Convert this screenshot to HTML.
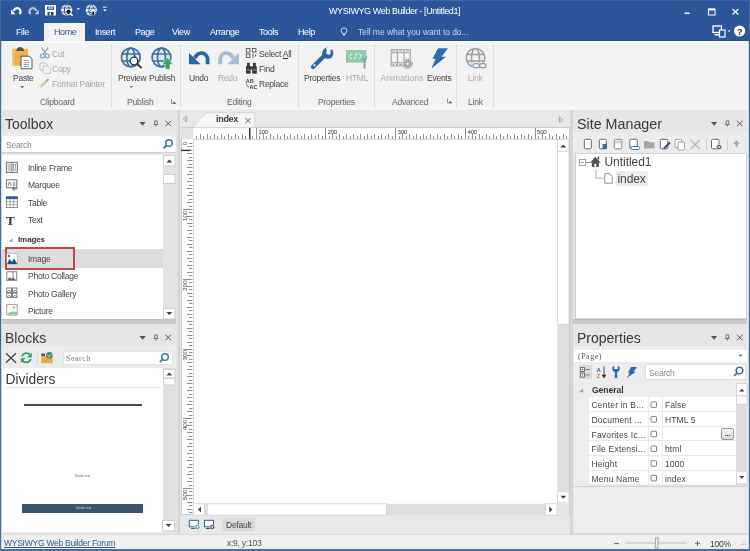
<!DOCTYPE html>
<html><head><meta charset="utf-8">
<style>
*{margin:0;padding:0;box-sizing:border-box}
html{-webkit-font-smoothing:antialiased}body{filter:saturate(1.0001)}html,body{width:750px;height:551px;overflow:hidden;background:#ececec;font-family:"Liberation Sans",sans-serif;font-size:9px;color:#333}
.a{position:absolute}
.t{position:absolute;white-space:nowrap;line-height:1}
.s{font-size:8.5px;letter-spacing:-0.25px}
.m{font-size:9px;letter-spacing:-0.4px;color:#fff}
.sep{position:absolute;width:1px;background:#dcdcdc;top:44px;height:64px}
.grp{position:absolute;top:97.8px;color:#666;font-size:8.5px;letter-spacing:-0.2px}
.dis{color:#a9a9a9}
.ph{position:absolute;background:#e6e6e6}
.ptitle{position:absolute;font-size:14px;color:#3a3a3a;line-height:1}
.w{background:#fff}
.icn{position:absolute;overflow:visible}
</style></head><body>
<!-- title bar -->
<div class="a" style="left:0;top:0;width:750px;height:41px;background:#2b579a"></div><div class="a" style="left:0;top:0;width:750px;height:1px;background:#3a67a9"></div><div class="a" style="left:0;top:40px;width:750px;height:1px;background:#27508e"></div>
<div class="a" style="left:0;top:0;width:1px;height:551px;background:#466c95"></div><div class="a" style="left:1px;top:41px;width:1px;height:510px;background:#c9d6e3"></div>
<div class="a" style="left:749px;top:0;width:1px;height:551px;background:#466c95"></div><div class="a" style="left:748px;top:41px;width:1px;height:510px;background:#c9d6e3"></div>

<div class="t" style="left:329px;top:7px;color:#fff;font-size:9px;letter-spacing:-0.4px">WYSIWYG Web Builder - [Untitled1]</div>

<!-- menu tabs -->
<div class="a" style="left:44px;top:23px;width:41px;height:18px;background:#f3f3f3"></div>
<div class="t m" style="left:16px;top:28px">File</div>
<div class="t m" style="left:54px;top:28px;color:#2b579a">Home</div>
<div class="t m" style="left:95px;top:28px">Insert</div>
<div class="t m" style="left:135px;top:28px">Page</div>
<div class="t m" style="left:172px;top:28px">View</div>
<div class="t m" style="left:210px;top:28px">Arrange</div>
<div class="t m" style="left:259px;top:28px">Tools</div>
<div class="t m" style="left:298px;top:28px">Help</div>
<div class="t m" style="left:358px;top:28px;color:#c9d5e8;font-size:8.5px;letter-spacing:-0.05px">Tell me what you want to do...</div>

<!-- ribbon -->
<div class="a" style="left:2px;top:41px;width:746px;height:69px;background:#f2f2f2"></div><div class="a" style="left:2px;top:41px;width:746px;height:1.5px;background:#fbfbfb"></div><div class="a" style="left:2px;top:107px;width:746px;height:2px;background:#f7f7f7"></div>
<div class="sep" style="left:111px"></div>
<div class="sep" style="left:180px"></div>
<div class="sep" style="left:298px"></div>
<div class="sep" style="left:374px"></div>
<div class="sep" style="left:456px"></div>
<div class="sep" style="left:493px"></div>
<div class="grp t" style="left:40px">Clipboard</div>
<div class="grp t" style="left:127px">Publish</div>
<div class="grp t" style="left:227px">Editing</div>
<div class="grp t" style="left:318px">Properties</div>
<div class="grp t" style="left:392px">Advanced</div>
<div class="grp t" style="left:468px">Link</div>

<div class="t s" style="left:13px;top:74px;color:#444">Paste</div>
<div class="t s dis" style="left:52px;top:50px">Cut</div>
<div class="t s dis" style="left:52px;top:65px">Copy</div>
<div class="t s dis" style="left:52px;top:80px">Format Painter</div>
<div class="t s" style="left:118px;top:74px;color:#444">Preview</div>
<div class="t s" style="left:149px;top:74px;color:#444">Publish</div>
<div class="t s" style="left:189px;top:74px;color:#444">Undo</div>
<div class="t s dis" style="left:218px;top:74px">Redo</div>
<div class="t s" style="left:259px;top:50px;color:#444">Select <u>A</u>ll</div>
<div class="t s" style="left:259px;top:65px;color:#444">Find</div>
<div class="t s" style="left:259px;top:80px;color:#444">Replace</div>
<div class="t s" style="left:304px;top:74px;color:#444">Properties</div>
<div class="t s dis" style="left:346px;top:74px">HTML</div>
<div class="t s dis" style="left:380.5px;top:74px;letter-spacing:0.1px">Animations</div>
<div class="t s" style="left:427px;top:74px;color:#444">Events</div>
<div class="t s dis" style="left:468px;top:74px">Link</div>

<!-- ================= PANELS ================= -->
<!-- Toolbox -->
<div class="ph" style="left:2px;top:110px;width:174px;height:210px"></div><div class="a" style="left:2px;top:131.6px;width:174px;height:4.4px;background:#ececec"></div>
<div class="ptitle t" style="left:5px;top:117px">Toolbox</div>
<div class="a w" style="left:2px;top:136px;width:174px;height:17px;border-bottom:1px solid #cfcfcf"></div>
<div class="t s" style="left:6px;top:141px;color:#888">Search</div>
<div class="a w" style="left:2px;top:155px;width:161px;height:165px"></div>
<div class="a" style="left:163px;top:155px;width:13px;height:165px;background:#e3e3e3"></div>


<!-- toolbox items -->
<div class="a" style="left:2px;top:249px;width:161px;height:19px;background:#dcdcdc"></div>
<div class="a" style="left:5px;top:247px;width:70px;height:23px;border:2px solid #c2474b"></div>
<div class="t s" style="left:28px;top:164px;color:#444">Inline Frame</div>
<div class="t s" style="left:28px;top:181px;color:#444">Marquee</div>
<div class="t s" style="left:28px;top:199px;color:#444">Table</div>
<div class="t s" style="left:28px;top:216px;color:#444">Text</div>
<div class="t" style="left:18px;top:236px;color:#333;font-size:8px;font-weight:bold;letter-spacing:-0.1px">Images</div>
<div class="t s" style="left:28px;top:255px;color:#444">Image</div>
<div class="t s" style="left:28px;top:272px;color:#444">Photo Collage</div>
<div class="t s" style="left:28px;top:290px;color:#444">Photo Gallery</div>
<div class="t s" style="left:28px;top:307px;color:#444">Picture</div>
<!-- Blocks -->
<div class="ph" style="left:2px;top:322.5px;width:174px;height:211.5px"></div><div class="a" style="left:2px;top:319.3px;width:174px;height:5px;background:#cbcbcb;border-top:1px solid #bfbfbf"></div><div class="a" style="left:2px;top:345.5px;width:174px;height:22px;background:#ececec"></div>
<div class="ptitle t" style="left:5px;top:331px">Blocks</div>
<div class="a w" style="left:63px;top:351px;width:109px;height:14px"></div>
<div class="a w" style="left:2px;top:368px;width:161px;height:164px"></div>
<div class="a" style="left:163px;top:368px;width:13px;height:164px;background:#e0e0e0"></div>
<div class="ptitle t" style="left:5.5px;top:373px;font-size:13.8px">Dividers</div>


<!-- blocks contents -->
<div class="a" style="left:37px;top:351px;width:1px;height:14px;background:#d8d8d8"></div>
<div class="a w" style="left:62.5px;top:350.5px;width:110px;height:14.5px;border:1px solid #e2e2e2"></div>
<div class="t" style="left:66px;top:355px;color:#777;font-family:'Liberation Serif',serif;font-size:8px;letter-spacing:0.5px">Search</div>
<div class="a" style="left:5px;top:387px;width:156px;height:1px;background:#e3e3e3"></div>
<div class="a" style="left:24px;top:404px;width:118px;height:2px;background:#434b4e"></div>
<div class="a" style="left:22px;top:504px;width:121px;height:8.5px;background:#3b5670"></div>
<div class="t" style="left:75px;top:475px;color:#666;font-size:3px">Divider text</div>
<div class="t" style="left:76px;top:506.5px;color:#c8d2dc;font-size:3px">Divider text</div>
<!-- doc area -->
<div class="a" style="left:176px;top:110px;width:4.5px;height:424px;background:#e3e3e3"></div><div class="a" style="left:177.5px;top:110px;width:3px;height:424px;background:#d3d3d3"></div>
<div class="a" style="left:180px;top:110px;width:390px;height:424px;background:#e8e8e8"></div>
<div class="a" style="left:180.5px;top:127.3px;width:389px;height:388px;background:#fff;border:1px solid #cbcbcb"></div>
<div class="a" style="left:181px;top:128px;width:11.7px;height:11.3px;background:#e3e3e3"></div>
<div class="a" style="left:192.7px;top:139.3px;width:364.5px;height:364.5px;background:#fff;border-top:1px solid #d8d8d8;border-left:1px solid #d8d8d8"></div>
<div class="t" style="left:258.3px;top:129.3px;color:#333;font-size:6.2px;letter-spacing:-0.3px">100</div>
<div class="t" style="left:327.5px;top:129.3px;color:#333;font-size:6.2px;letter-spacing:-0.3px">200</div>
<div class="t" style="left:397.5px;top:129.3px;color:#333;font-size:6.2px;letter-spacing:-0.3px">300</div>
<div class="t" style="left:467.5px;top:129.3px;color:#333;font-size:6.2px;letter-spacing:-0.3px">400</div>
<div class="t" style="left:537px;top:129.3px;color:#333;font-size:6.2px;letter-spacing:-0.3px">500</div>
<!-- bottom doc toolbar -->
<div class="a" style="left:223px;top:518.4px;width:31.5px;height:13px;background:#dadada"></div>
<div class="t s" style="left:226px;top:521px;color:#444">Default</div>
<!-- right panels -->
<div class="a" style="left:569.5px;top:110px;width:3.5px;height:424px;background:#d6d6d6"></div>
<div class="ph" style="left:573px;top:110px;width:174px;height:210px"></div><div class="a" style="left:573px;top:131.6px;width:174px;height:21.7px;background:#ececec"></div>
<div class="ptitle t" style="left:577px;top:117px;font-size:14.3px">Site Manager</div>
<div class="a" style="left:705.5px;top:139px;width:1px;height:11px;background:#d4d4d4"></div>
<div class="a" style="left:726.5px;top:139px;width:1px;height:11px;background:#d4d4d4"></div>
<div class="a w" style="left:574.5px;top:153.3px;width:172px;height:166.2px;border:1px solid #d2d2d2"></div>
<div class="a" style="left:616px;top:171.2px;width:31.6px;height:15px;background:#ececec"></div>
<div class="t" style="left:604.5px;top:156px;color:#444;font-size:12px;letter-spacing:-0.05px">Untitled1</div>
<div class="t" style="left:617.5px;top:173px;color:#444;font-size:12px;letter-spacing:-0.1px">index</div>
<div class="ph" style="left:573px;top:322.5px;width:174px;height:211.5px"></div><div class="a" style="left:573px;top:319.2px;width:174px;height:5px;background:#cbcbcb;border-top:1px solid #bdbdbd"></div><div class="a" style="left:573px;top:345.5px;width:174px;height:37.5px;background:#ececec"></div>
<div class="ptitle t" style="left:577px;top:331px">Properties</div>
<div class="a w" style="left:574px;top:349.6px;width:172.5px;height:12px"></div>
<div class="t" style="left:578px;top:352.5px;color:#555;font-family:'Liberation Serif',serif;font-size:8px;letter-spacing:0.5px">(Page)</div>
<div class="a" style="left:578.8px;top:365.2px;width:13.2px;height:13.8px;background:#dadada"></div>
<div class="a w" style="left:644.8px;top:364px;width:101px;height:16.2px;border:1px solid #dedede"></div>
<div class="t s" style="left:649px;top:368.5px;color:#888">Search</div>
<div class="a" style="left:574px;top:383px;width:162px;height:14.3px;background:#ececec"></div>
<div class="a" style="left:574px;top:397.3px;width:15.3px;height:88.5px;background:#ececec"></div>
<div class="t" style="left:592px;top:386.3px;color:#333;font-size:8.5px;font-weight:bold">General</div>
<div class="a w" style="left:589.3px;top:397.3px;width:146.7px;height:14.7px;border-bottom:1px solid #ebebeb"></div>
<div class="t" style="left:591.5px;top:401.1px;color:#444;font-size:8.5px;letter-spacing:0.2px">Center in B...</div>
<div class="t" style="left:665px;top:401.1px;color:#444;font-size:8.5px;letter-spacing:0.1px">False</div>
<div class="a w" style="left:589.3px;top:412.0px;width:146.7px;height:14.7px;border-bottom:1px solid #ebebeb"></div>
<div class="t" style="left:591.5px;top:415.8px;color:#444;font-size:8.5px;letter-spacing:0.2px">Document ...</div>
<div class="t" style="left:665px;top:415.8px;color:#444;font-size:8.5px;letter-spacing:0.1px">HTML 5</div>
<div class="a w" style="left:589.3px;top:426.7px;width:146.7px;height:14.7px;border-bottom:1px solid #ebebeb"></div>
<div class="t" style="left:591.5px;top:430.5px;color:#444;font-size:8.5px;letter-spacing:0.2px">Favorites Ic...</div>
<div class="a w" style="left:589.3px;top:441.4px;width:146.7px;height:14.7px;border-bottom:1px solid #ebebeb"></div>
<div class="t" style="left:591.5px;top:445.2px;color:#444;font-size:8.5px;letter-spacing:0.2px">File Extensi...</div>
<div class="t" style="left:665px;top:445.2px;color:#444;font-size:8.5px;letter-spacing:0.1px">html</div>
<div class="a w" style="left:589.3px;top:456.1px;width:146.7px;height:14.7px;border-bottom:1px solid #ebebeb"></div>
<div class="t" style="left:591.5px;top:459.9px;color:#444;font-size:8.5px;letter-spacing:0.2px">Height</div>
<div class="t" style="left:665px;top:459.9px;color:#444;font-size:8.5px;letter-spacing:0.1px">1000</div>
<div class="a w" style="left:589.3px;top:470.8px;width:146.7px;height:14.7px;border-bottom:1px solid #ebebeb"></div>
<div class="t" style="left:591.5px;top:474.6px;color:#444;font-size:8.5px;letter-spacing:0.2px">Menu Name</div>
<div class="t" style="left:665px;top:474.6px;color:#444;font-size:8.5px;letter-spacing:0.1px">index</div>

<div class="a" style="left:648px;top:397.3px;width:1px;height:88.2px;background:#ebebeb"></div>
<div class="a" style="left:661.5px;top:397.3px;width:1px;height:88.2px;background:#ebebeb"></div>
<div class="a" style="left:736px;top:383px;width:11px;height:102.8px;background:#dcdcdc"></div>
<div class="a" style="left:721.3px;top:427.9px;width:13px;height:12px;border:1px solid #9a9a9a;border-radius:2px;background:linear-gradient(#f4f4f4,#dcdcdc)"></div>
<div class="t" style="left:724.8px;top:430px;color:#333;font-size:7px;font-weight:bold">...</div>
<div class="a" style="left:574px;top:486px;width:172.5px;height:48px;background:#ececec;border-top:1px solid #d0d0d0;border-bottom:1px solid #d6d6d6"></div>
<!-- status bar -->
<div class="a" style="left:2px;top:534px;width:746px;height:15px;background:#f0f0f0;border-top:1px solid #d9d9d9"></div>
<div class="t s" style="left:4px;top:539px;color:#2f5d92;text-decoration:underline">WYSIWYG Web Builder Forum</div>
<div class="t s" style="left:227px;top:539px;color:#555">x:9, y:103</div>

<svg class="a" style="left:0;top:0" width="750" height="551" viewBox="0 0 750 551">
<!-- QAT -->
<path d="M13.8 11 A3.4 3.4 0 1 1 19.5 14" fill="none" stroke="#fff" stroke-width="2.3"/>
<path d="M11 9.6 L11 14.3 L15.7 14.3 Z" fill="#fff"/>
<path d="M36.2 11 A3.4 3.4 0 1 0 30.5 14" fill="none" stroke="#a9c1e3" stroke-width="2.3"/>
<path d="M39 9.6 L39 14.3 L34.3 14.3 Z" fill="#a9c1e3"/>
<rect x="45" y="5" width="11" height="10.5" fill="#fff"/>
<rect x="47" y="6.5" width="7" height="3.5" fill="#2b579a"/>
<rect x="48" y="6.8" width="5" height="2.6" fill="#fff" opacity=".5"/>
<rect x="47.5" y="12" width="6" height="3.5" fill="#1e3f70"/>
<rect x="49.5" y="12.5" width="1.5" height="2.5" fill="#fff"/>
<circle cx="66.7" cy="10" r="5.6" fill="#f2f5fa"/>
<g fill="none" stroke="#2b4f80" stroke-width="0.9"><ellipse cx="66.7" cy="10" rx="2.3" ry="5"/><path d="M61.8 8 H71.6 M61.8 12 H71.6"/></g>
<circle cx="68.5" cy="11.8" r="2.6" fill="#111" stroke="#fff" stroke-width="0.9"/>
<path d="M70.3 13.6 L72.6 15.8" stroke="#fff" stroke-width="1.5"/>
<path d="M76.5 8.3 h3.5 l-1.75 1.8z" fill="#fff"/>
<circle cx="91.3" cy="10.2" r="5.6" fill="#f2f5fa"/>
<g fill="none" stroke="#2b4f80" stroke-width="0.9"><ellipse cx="91.3" cy="10.2" rx="2.3" ry="5"/><path d="M86.4 8.2 H96.2 M86.4 12.2 H96.2"/></g>
<path d="M93.2 8.3 L97.3 12.4 H95.1 V15.6 H91.3 V12.4 H89.1Z" fill="#fff" stroke="#2b579a" stroke-width="0.7"/>
<path d="M92.3 11.5 V15 H94.1 V11.5" fill="#111"/>
<path d="M103 7.2 h3.6" stroke="#fff" stroke-width="0.9"/>
<path d="M103 9.6 h3.6 l-1.8 1.8z" fill="#fff"/>
<!-- window controls -->
<rect x="684.5" y="12.5" width="5" height="1.5" fill="#fff"/>
<rect x="708.5" y="9" width="6.5" height="6" fill="none" stroke="#fff" stroke-width="1"/>
<rect x="708.5" y="8.5" width="6.5" height="2" fill="#fff"/>
<path d="M732.5 9 L738.3 14.5 M738.3 9 L732.5 14.5" stroke="#fff" stroke-width="1.1"/>
<rect x="713" y="26" width="8.5" height="6.5" fill="none" stroke="#fff" stroke-width="1.3"/>
<rect x="714.5" y="34" width="5" height="1.5" fill="#fff"/>
<rect x="719.5" y="30" width="5.5" height="7" fill="#2b579a" stroke="#fff" stroke-width="1.2"/>
<path d="M727.5 30.5 h3 l-1.5 1.6z" fill="#fff"/>
<circle cx="739.6" cy="31" r="5.6" fill="#fff"/>
<text x="739.6" y="34.6" font-size="9.5" font-family="Liberation Sans" font-weight="bold" fill="#333" text-anchor="middle">?</text>
<!-- lightbulb -->
<circle cx="344" cy="30.8" r="2.9" fill="none" stroke="#c9d5e8" stroke-width="1"/>
<path d="M342.6 33.3 L344 36 L345.4 33.3" fill="none" stroke="#c9d5e8" stroke-width="1"/>
</svg>

<svg class="a" style="left:0;top:0" width="750" height="551" viewBox="0 0 750 551">
<!-- Paste -->
<rect x="12.4" y="48.8" width="15.6" height="17" fill="#f0b24e"/>
<rect x="12.4" y="48.8" width="2" height="17" fill="#f5c679"/>
<path d="M16.3 51 Q16.3 47.5 20.2 47 Q24.1 47.5 24.1 51 Z" fill="#555"/>
<path d="M21 56.2 H29.3 L32 58.9 V68.8 H21 Z" fill="#fff" stroke="#555" stroke-width="1"/>
<path d="M23.5 60.5 H29.5 M23.5 62.5 H29.5 M23.5 64.5 H29.5 M23.5 66.5 H29.5" stroke="#6f8fb0" stroke-width="0.8"/>
<path d="M20.2 86.2 h4 l-2 1.8z" fill="#444"/>
<!-- Cut -->
<path d="M41.5 47.5 L46 54 M48 47.5 L43.5 54" stroke="#8094a8" stroke-width="1.2"/>
<circle cx="42.3" cy="56" r="1.9" fill="none" stroke="#87aacb" stroke-width="1.3"/>
<circle cx="47.2" cy="56" r="1.9" fill="none" stroke="#87aacb" stroke-width="1.3"/>
<!-- Copy -->
<path d="M40 63 H45.5 L47 64.5 V70 H40 Z" fill="none" stroke="#c0c0c0" stroke-width="0.9"/>
<path d="M43 66 H48.5 L50.3 67.8 V73.4 H43 Z" fill="#f3f3f3" stroke="#b8c4cf" stroke-width="0.9"/>
<!-- Format painter -->
<path d="M40.5 87 L45.5 82" stroke="#e2c9a8" stroke-width="3"/>
<path d="M45.5 82 L48.5 79" stroke="#a8a8a8" stroke-width="1.8"/>
<!-- Preview globe -->
<g stroke="#406f9c" stroke-width="1.7" fill="none">
<circle cx="130.8" cy="57.5" r="9.4" fill="#dbeaf4"/>
<ellipse cx="130.8" cy="57.5" rx="4" ry="9.4"/>
<path d="M121.8 54 H139.8 M121.8 61 H139.8"/>
</g>
<circle cx="134" cy="61" r="3.8" fill="#fff" stroke="#333" stroke-width="1.3"/>
<path d="M136.8 63.8 L141.6 68" stroke="#333" stroke-width="1.8"/>
<path d="M129.5 86.2 h3.5 l-1.75 1.6z" fill="#444"/>
<!-- Publish globe -->
<g stroke="#406f9c" stroke-width="1.7" fill="none">
<circle cx="161.5" cy="57.5" r="9.4" fill="#dbeaf4"/>
<ellipse cx="161.5" cy="57.5" rx="4" ry="9.4"/>
<path d="M152.5 54 H170.5 M152.5 61 H170.5"/>
</g>
<path d="M167.6 57.3 L173 64.5 H170 V69.3 H165.2 V64.5 H162.2 Z" fill="#3aa46b" stroke="#f3f3f3" stroke-width="0.6"/>
<path d="M171.5 99 v4.5 h4.5" fill="none" stroke="#777" stroke-width="0.8"/><path d="M173.5 101 l2.5 2.5 h-2.5z" fill="#555"/>
<path d="M447.5 98.5 v4.5 h4.5" fill="none" stroke="#777" stroke-width="0.8"/><path d="M449.5 100.5 l2.5 2.5 h-2.5z" fill="#555"/>
<!-- Undo / Redo -->
<path d="M195 58.5 A6.3 6.3 0 0 1 207.6 60.5 V64.3" fill="none" stroke="#2c66aa" stroke-width="3.8"/>
<path d="M189 52.8 V64.3 H200.5 Z" fill="#2c66aa"/>
<path d="M232.8 58.5 A6.3 6.3 0 0 0 220.2 60.5 V64.3" fill="none" stroke="#a4bdd8" stroke-width="3.8"/>
<path d="M238.8 52.8 V64.3 H227.3 Z" fill="#a4bdd8"/>
<!-- Select all -->
<g fill="none" stroke="#555" stroke-width="0.9">
<rect x="246.3" y="48.5" width="3.6" height="3.6"/><rect x="252.3" y="48.5" width="3.6" height="3.6"/>
<rect x="246.3" y="54" width="3.6" height="3.6"/>
</g>
<path d="M253 53.5 v4.5 M255.5 54.5 v2" stroke="#555" stroke-width="0.9"/>
<!-- Find binoculars -->
<g fill="#383838">
<rect x="246" y="66" width="4.6" height="7.8" rx="0.8"/><rect x="252.2" y="66" width="4.6" height="7.8" rx="0.8"/>
<rect x="247" y="62.8" width="2.8" height="4"/><rect x="253" y="62.8" width="2.8" height="4"/>
<rect x="249.5" y="66.5" width="3.5" height="3"/>
</g>
<path d="M247 70 h2.5 M253.2 70 h2.5" stroke="#ccc" stroke-width="0.8"/>
<!-- Replace -->
<text x="245.8" y="83" font-size="5.5" font-family="Liberation Sans" font-weight="bold" fill="#444">AB</text>
<text x="249.5" y="89" font-size="5.5" font-family="Liberation Sans" font-weight="bold" fill="#444">AC</text>
<path d="M246.5 83.5 q0 3.5 2.5 3.5" fill="none" stroke="#3a78b5" stroke-width="0.9"/>
<!-- Wrench -->
<path d="M313 67 L324 56" stroke="#2e65a5" stroke-width="4.2" stroke-linecap="round"/>
<circle cx="327.8" cy="53.2" r="5.6" fill="#2e65a5"/>
<path d="M327.8 53.2 L334 47 L331 46 L326 48.5 Z" fill="#f3f3f3"/>
<circle cx="328.5" cy="52.5" r="2.2" fill="#f3f3f3"/>
<circle cx="314.5" cy="65.3" r="1" fill="#fff"/>
<!-- HTML -->
<rect x="346" y="50" width="20.4" height="12.7" fill="#8fcdaa"/>
<path d="M352 53.5 L349 56.3 L352 59 M356.5 53 L354.5 59.5 M359 53.5 L362 56.3 L359 59" fill="none" stroke="#e7f5ec" stroke-width="1"/>
<path d="M364.5 60 V68.8" stroke="#8a9bb0" stroke-width="1.8"/>
<path d="M361.8 56.3 Q362 60.5 364.5 60.5 Q367 60.5 367.3 56.3 L366 56.3 L366 58.5 L363 58.5 L363 56.3 Z" fill="#8a9bb0"/>
<!-- Animations -->
<g fill="none" stroke="#a3a3a3" stroke-width="1.1">
<rect x="391.2" y="49.7" width="19" height="16.2"/>
<path d="M391.2 52.8 H410.2 M391.2 62.8 H410.2 M397.5 52.8 V62.8 M404 52.8 V62.8"/>
</g>
<path d="M392.5 51.2 h2 M396 51.2 h2 M399.5 51.2 h2 M403 51.2 h2 M406.5 51.2 h2 M392.5 64.3 h2 M396 64.3 h2 M399.5 64.3 h2" stroke="#a3a3a3" stroke-width="1.2"/>
<circle cx="407.6" cy="63.8" r="4.3" fill="#a3a3a3" stroke="#f3f3f3" stroke-width="1"/>
<circle cx="407.6" cy="63.8" r="4.6" fill="none" stroke="#a3a3a3" stroke-width="1.5" stroke-dasharray="1.4 1"/>
<circle cx="407.6" cy="63.8" r="1.4" fill="#f3f3f3"/>
<!-- Events bolt -->
<path d="M438 48.2 H448 L441.5 56.8 H446 L431.5 68.6 L435.5 58.8 H432.5 Z" fill="#2e6ab3"/>
<!-- Link globe -->
<g stroke="#9d9d9d" stroke-width="1.5" fill="none">
<circle cx="475.5" cy="57.8" r="9.3"/>
<ellipse cx="475.5" cy="57.8" rx="4" ry="9.3"/>
<path d="M466.5 54.5 H484.5 M466.5 61 H484.5"/>
</g>
<rect x="472" y="62.5" width="14.6" height="6" fill="#f3f3f3"/>
<g fill="none" stroke="#7f9fba" stroke-width="1.3">
<rect x="473" y="63.6" width="6.5" height="4" rx="2"/><rect x="479.5" y="63.6" width="6.5" height="4" rx="2"/>
</g>
</svg>

<svg class="a" style="left:0;top:0" width="750" height="551" viewBox="0 0 750 551">
<!-- panel header buttons -->
<g id="hb">
<path d="M139.4 122 h6.3 l-3.15 3.7z" fill="#555"/>
<path d="M154.6 120.9 h2.6 v3.4 M154.6 120.9 v3.4 M153.5 124.5 h4.8 M155.9 124.5 v2.2" fill="none" stroke="#6a6a6a" stroke-width="0.9"/>
<path d="M165.5 120.7 L171 126.3 M171 120.7 L165.5 126.3" stroke="#555" stroke-width="1"/>
</g>
<use href="#hb" x="571.5" y="0"/>
<use href="#hb" x="0" y="214"/>
<use href="#hb" x="571.5" y="214"/>
<!-- toolbox search magnifier -->
<circle cx="169" cy="143" r="3.3" fill="none" stroke="#3b7a8d" stroke-width="1.5"/>
<path d="M166.6 145.4 L163.6 148.4" stroke="#3b7a8d" stroke-width="1.8"/>
<!-- toolbox scrollbar -->
<rect x="163.5" y="155.5" width="11.5" height="10.5" fill="#fff" stroke="#d0d0d0" stroke-width="1"/>
<path d="M166.3 162.5 h6 l-3 -3z" fill="#444"/>
<rect x="163.5" y="174.5" width="11.5" height="9" fill="#fff" stroke="#d0d0d0" stroke-width="1"/>
<rect x="163.5" y="308.5" width="11.5" height="10.5" fill="#fff" stroke="#d0d0d0" stroke-width="1"/>
<path d="M166.3 312 h6 l-3 3z" fill="#444"/>
<!-- inline frame icon -->
<rect x="6.3" y="162.3" width="11" height="10.3" fill="#fff" stroke="#666" stroke-width="0.9"/>
<rect x="7.5" y="163.5" width="4" height="8" fill="#c9c9c9"/>
<path d="M12 162.3 v10.3" stroke="#666" stroke-width="0.9"/>
<rect x="13.5" y="164.5" width="2.2" height="6" fill="none" stroke="#888" stroke-width="0.7"/>
<!-- marquee icon -->
<rect x="6.3" y="179.8" width="10.5" height="8" fill="#fff" stroke="#666" stroke-width="0.9"/>
<path d="M8 185.5 l1.5 -3.5 l1.5 3.5 M12.5 183 h3 M12.5 185 h3" fill="none" stroke="#555" stroke-width="0.8"/>
<path d="M17.5 188.8 h-5 M14.5 186.8 l-2 2 l2 2" fill="none" stroke="#2d6aa3" stroke-width="1"/>
<!-- table icon -->
<rect x="6.3" y="196.8" width="11" height="10.8" fill="#fff" stroke="#777" stroke-width="0.8"/>
<rect x="6" y="196.5" width="11.6" height="2.6" fill="#2b5f8f"/>
<path d="M6.3 201.8 h11 M6.3 204.6 h11 M10 199 v8.6 M13.7 199 v8.6" stroke="#888" stroke-width="0.7"/>
<!-- text icon -->
<text x="6" y="224.5" font-family="Liberation Serif" font-size="13" font-weight="bold" fill="#333">T</text>
<!-- images triangle -->
<path d="M12.4 238.4 v3.2 h-3.2z" fill="#777"/>
<!-- image icon -->
<rect x="6.8" y="253.6" width="10.4" height="10.4" fill="#fff" stroke="#8aa" stroke-width="0.6"/>
<path d="M7 264 L9.5 259 L12 262 L14 258.5 L17.2 264 Z" fill="#1f4d80"/>
<circle cx="9" cy="256" r="1.2" fill="#3a6fa5"/>
<!-- photo collage -->
<rect x="6.8" y="271.8" width="10" height="8.5" fill="#fff" stroke="#666" stroke-width="0.8"/>
<path d="M7.3 280 l2.5 -3 l2 2 l1.5 -1.5 l2.5 2.5z" fill="#666"/>
<path d="M13 272 v8" stroke="#666" stroke-width="0.8"/>
<!-- photo gallery -->
<g fill="#fff" stroke="#666" stroke-width="0.8">
<rect x="6.8" y="288" width="4.6" height="4.3"/><rect x="12.4" y="288" width="4.6" height="4.3"/>
<rect x="6.8" y="293.2" width="4.6" height="4.3"/><rect x="12.4" y="293.2" width="4.6" height="4.3"/>
</g>
<path d="M7.2 292 l2 -2 l2 2 M12.8 292 l2 -2 l2 2 M7.2 297.2 l2 -2 l2 2 M12.8 297.2 l2 -2 l2 2" fill="none" stroke="#555" stroke-width="0.7"/>
<!-- picture -->
<rect x="6.8" y="304.7" width="10.4" height="10.3" fill="#fff" stroke="#888" stroke-width="0.8"/>
<path d="M7.2 314.6 Q10 310 17 312 V314.6z" fill="#8cc9a8"/>
<circle cx="14" cy="307.5" r="1.2" fill="#e5b84d"/>
</svg>

<svg class="a" style="left:0;top:0" width="750" height="551" viewBox="0 0 750 551">
<path d="M6 353.3 L16 362.7 M16 353.3 L6 362.7" stroke="#444" stroke-width="1.3"/>
<path d="M22 356.5 A4.6 4.6 0 0 1 30.5 355.5" fill="none" stroke="#3aa36a" stroke-width="1.8"/>
<path d="M31.8 352.5 L31.8 357.5 L27 357.5 Z" fill="#3aa36a"/>
<path d="M30.7 359 A4.6 4.6 0 0 1 22.2 360" fill="none" stroke="#3aa36a" stroke-width="1.8"/>
<path d="M20.8 363.3 L20.8 358.3 L25.6 358.3 Z" fill="#3aa36a"/>
<rect x="41.3" y="356" width="11.4" height="7.3" fill="#eaa94c"/>
<path d="M41.3 356 V353.5 H45 V356" fill="#555"/>
<circle cx="49.3" cy="355.3" r="3.2" fill="#4c8b7a"/>
<path d="M47.8 355.3 l1.2 1.2 l2 -2.2" fill="none" stroke="#fff" stroke-width="0.8"/>
<circle cx="165" cy="357" r="3.3" fill="none" stroke="#3b7a8d" stroke-width="1.5"/>
<path d="M162.6 359.4 L159.8 362.2" stroke="#3b7a8d" stroke-width="1.8"/>
<!-- blocks scrollbar -->
<rect x="163.5" y="369.5" width="11.5" height="8.5" fill="#fff" stroke="#d0d0d0" stroke-width="1"/>
<path d="M166.3 375.5 h6 l-3 -3z" fill="#444"/>
<rect x="163.5" y="378.5" width="11.5" height="6.5" fill="#fff" stroke="#d0d0d0" stroke-width="1"/>
<rect x="162.5" y="520.5" width="12" height="10.5" fill="#fff" stroke="#d0d0d0" stroke-width="1"/>
<path d="M165.5 524 h6 l-3 3z" fill="#444"/>
</svg>

<svg class="a" style="left:0;top:0" width="750" height="551" viewBox="0 0 750 551">
<path d="M186.7 116 V122 L183.3 119 Z" fill="none" stroke="#999" stroke-width="0.8"/>
<path d="M559.4 117 V122.6 L562.7 119.8 Z" fill="none" stroke="#999" stroke-width="0.8"/>
<path d="M192.7 127.3 L206 112.7 H254.7 V127.3" fill="#f6f6f6" stroke="#d0d0d0" stroke-width="0.8"/>
<path d="M245.3 118.2 L250.7 123 M250.7 118.2 L245.3 123" stroke="#555" stroke-width="0.9"/>
<text x="216" y="122.3" font-size="9" font-weight="bold" font-family="Liberation Sans" fill="#3a3a3a" letter-spacing="-0.3">index</text>
<path d="M196.5 136.2 V139 M200.5 134 V139 M203.5 136.2 V139 M207.5 134 V139 M210.5 136.2 V139 M214.5 134 V139 M217.5 136.2 V139 M221.5 134 V139 M224.5 136.2 V139 M228.5 134 V139 M231.5 136.2 V139 M235.5 134 V139 M238.5 136.2 V139 M242.5 134 V139 M245.5 136.2 V139 M249.5 134 V139 M252.5 136.2 V139 M256.5 128 V139 M259.5 136.2 V139 M263.5 134 V139 M266.5 136.2 V139 M270.5 134 V139 M273.5 136.2 V139 M277.5 134 V139 M280.5 136.2 V139 M284.5 134 V139 M287.5 136.2 V139 M290.5 134 V139 M294.5 136.2 V139 M297.5 134 V139 M301.5 136.2 V139 M304.5 134 V139 M308.5 136.2 V139 M311.5 134 V139 M315.5 136.2 V139 M318.5 134 V139 M322.5 136.2 V139 M325.5 128 V139 M329.5 136.2 V139 M332.5 134 V139 M336.5 136.2 V139 M339.5 134 V139 M343.5 136.2 V139 M346.5 134 V139 M350.5 136.2 V139 M353.5 134 V139 M357.5 136.2 V139 M360.5 134 V139 M364.5 136.2 V139 M367.5 134 V139 M371.5 136.2 V139 M374.5 134 V139 M378.5 136.2 V139 M381.5 134 V139 M385.5 136.2 V139 M388.5 134 V139 M392.5 136.2 V139 M395.5 128 V139 M399.5 136.2 V139 M402.5 134 V139 M406.5 136.2 V139 M409.5 134 V139 M413.5 136.2 V139 M416.5 134 V139 M420.5 136.2 V139 M423.5 134 V139 M426.5 136.2 V139 M430.5 134 V139 M433.5 136.2 V139 M437.5 134 V139 M440.5 136.2 V139 M444.5 134 V139 M447.5 136.2 V139 M451.5 134 V139 M454.5 136.2 V139 M458.5 134 V139 M461.5 136.2 V139 M465.5 128 V139 M468.5 136.2 V139 M472.5 134 V139 M475.5 136.2 V139 M479.5 134 V139 M482.5 136.2 V139 M486.5 134 V139 M489.5 136.2 V139 M493.5 134 V139 M496.5 136.2 V139 M500.5 134 V139 M503.5 136.2 V139 M507.5 134 V139 M510.5 136.2 V139 M514.5 134 V139 M517.5 136.2 V139 M521.5 134 V139 M524.5 136.2 V139 M528.5 134 V139 M531.5 136.2 V139 M535.5 128 V139 M538.5 136.2 V139 M542.5 134 V139 M545.5 136.2 V139 M549.5 134 V139 M552.5 136.2 V139 M556.5 134 V139 M559.5 136.2 V139 M563.5 134 V139 M566.5 136.2 V139" stroke="#8f8f8f" stroke-width="1"/>
<path d="M189 143.5 H192.5 M187 146.5 H192.5 M189 150.5 H192.5 M187 153.5 H192.5 M189 157.5 H192.5 M187 160.5 H192.5 M189 164.5 H192.5 M187 167.5 H192.5 M189 171.5 H192.5 M187 174.5 H192.5 M189 178.5 H192.5 M187 181.5 H192.5 M189 185.5 H192.5 M187 188.5 H192.5 M189 192.5 H192.5 M187 195.5 H192.5 M189 199.5 H192.5 M187 202.5 H192.5 M189 206.5 H192.5 M183 209.5 H192.5 M189 212.5 H192.5 M187 216.5 H192.5 M189 219.5 H192.5 M187 223.5 H192.5 M189 226.5 H192.5 M187 230.5 H192.5 M189 233.5 H192.5 M187 237.5 H192.5 M189 240.5 H192.5 M187 244.5 H192.5 M189 247.5 H192.5 M187 251.5 H192.5 M189 254.5 H192.5 M187 258.5 H192.5 M189 261.5 H192.5 M187 265.5 H192.5 M189 268.5 H192.5 M187 272.5 H192.5 M189 275.5 H192.5 M183 279.5 H192.5 M189 282.5 H192.5 M187 286.5 H192.5 M189 289.5 H192.5 M187 293.5 H192.5 M189 296.5 H192.5 M187 300.5 H192.5 M189 303.5 H192.5 M187 307.5 H192.5 M189 310.5 H192.5 M187 314.5 H192.5 M189 317.5 H192.5 M187 321.5 H192.5 M189 324.5 H192.5 M187 328.5 H192.5 M189 331.5 H192.5 M187 335.5 H192.5 M189 338.5 H192.5 M187 342.5 H192.5 M189 345.5 H192.5 M183 349.5 H192.5 M189 352.5 H192.5 M187 355.5 H192.5 M189 359.5 H192.5 M187 362.5 H192.5 M189 366.5 H192.5 M187 369.5 H192.5 M189 373.5 H192.5 M187 376.5 H192.5 M189 380.5 H192.5 M187 383.5 H192.5 M189 387.5 H192.5 M187 390.5 H192.5 M189 394.5 H192.5 M187 397.5 H192.5 M189 401.5 H192.5 M187 404.5 H192.5 M189 408.5 H192.5 M187 411.5 H192.5 M189 415.5 H192.5 M183 418.5 H192.5 M189 422.5 H192.5 M187 425.5 H192.5 M189 429.5 H192.5 M187 432.5 H192.5 M189 436.5 H192.5 M187 439.5 H192.5 M189 443.5 H192.5 M187 446.5 H192.5 M189 450.5 H192.5 M187 453.5 H192.5 M189 457.5 H192.5 M187 460.5 H192.5 M189 464.5 H192.5 M187 467.5 H192.5 M189 471.5 H192.5 M187 474.5 H192.5 M189 478.5 H192.5 M187 481.5 H192.5 M189 485.5 H192.5 M183 488.5 H192.5 M189 491.5 H192.5 M187 495.5 H192.5 M189 498.5 H192.5 M187 502.5 H192.5 M189 505.5 H192.5 M187 509.5 H192.5 M189 512.5 H192.5" stroke="#8f8f8f" stroke-width="1"/>
<rect x="249" y="128" width="1.5" height="11.3" fill="#333"/>
<rect x="181" y="149.7" width="9.5" height="1.4" fill="#333"/>
<text transform="translate(187.2 145.05) rotate(-90)" font-size="6.2" font-family="Liberation Sans" fill="#333">0</text><text transform="translate(187.2 220.90) rotate(-90)" font-size="6.2" font-family="Liberation Sans" fill="#333">100</text><text transform="translate(187.2 290.65) rotate(-90)" font-size="6.2" font-family="Liberation Sans" fill="#333">200</text><text transform="translate(187.2 360.40) rotate(-90)" font-size="6.2" font-family="Liberation Sans" fill="#333">300</text><text transform="translate(187.2 430.15) rotate(-90)" font-size="6.2" font-family="Liberation Sans" fill="#333">400</text><text transform="translate(187.2 499.90) rotate(-90)" font-size="6.2" font-family="Liberation Sans" fill="#333">500</text>
<!-- doc v scrollbar -->
<rect x="557.5" y="139.5" width="11.5" height="363.5" fill="#dedede"/>
<rect x="557.5" y="139.5" width="11.5" height="11.8" fill="#fff" stroke="#cfcfcf" stroke-width="0.8"/>
<path d="M560.3 147.5 h6 l-3 -3z" fill="#444"/>
<rect x="557.5" y="151.3" width="11.5" height="173" fill="#fff" stroke="#cfcfcf" stroke-width="0.8"/>
<rect x="557.5" y="491.7" width="11.5" height="11.2" fill="#fff" stroke="#cfcfcf" stroke-width="0.8"/>
<path d="M560.3 495.8 h6 l-3 3z" fill="#444"/>
<!-- doc h scrollbar -->
<rect x="193" y="503.8" width="376" height="11.4" fill="#dedede"/>
<rect x="193.5" y="503.8" width="11.3" height="11.4" fill="#fff" stroke="#cfcfcf" stroke-width="0.8"/>
<path d="M201 506.5 v6 l-3 -3z" fill="#444"/>
<rect x="207.2" y="503.8" width="179.2" height="11.4" fill="#fff" stroke="#cfcfcf" stroke-width="0.8"/>
<rect x="545.3" y="503.8" width="11.7" height="11.4" fill="#fff" stroke="#cfcfcf" stroke-width="0.8"/>
<path d="M549.3 506.5 v6 l3 -3z" fill="#444"/>
<rect x="557.5" y="503.3" width="11.5" height="11.9" fill="#e6e6e6"/>
<!-- bottom toolbar icons -->
<rect x="189.3" y="520.3" width="9" height="6.5" fill="#fff" stroke="#2e5f8e" stroke-width="1"/>
<path d="M191 528.5 h5" stroke="#2e5f8e" stroke-width="1"/>
<circle cx="197.3" cy="527" r="2.6" fill="#3aa36a" stroke="#fff" stroke-width="0.6"/>
<path d="M195.8 527 h3 M197.3 525.5 v3" stroke="#fff" stroke-width="0.8"/>
<rect x="204.5" y="520.3" width="9" height="6.5" fill="#fff" stroke="#2e5f8e" stroke-width="1"/>
<path d="M206 528.5 h5" stroke="#2e5f8e" stroke-width="1"/>
<circle cx="212.3" cy="527" r="2.4" fill="#444" stroke="#fff" stroke-width="0.6"/>
<circle cx="212.3" cy="527" r="0.9" fill="#fff"/>
</svg>

<svg class="a" style="left:0;top:0" width="750" height="551" viewBox="0 0 750 551">
<!-- site manager toolbar -->
<g fill="#fff" stroke="#6a6a6a" stroke-width="1">
<rect x="584.3" y="139.3" width="7" height="9.5" rx="1"/>
<rect x="599.3" y="139.3" width="7" height="9.5" rx="1"/>
<rect x="614.3" y="139.3" width="7.5" height="9.5" rx="1" stroke="#8a8a8a"/>
<rect x="629.8" y="139.3" width="7.5" height="9" rx="1"/>
</g>
<rect x="602.5" y="144" width="4.5" height="5" fill="#3c6f9c"/>
<rect x="615.3" y="140.5" width="5.5" height="3" fill="#c7d6e3"/>
<rect x="631" y="146.5" width="8.5" height="3" rx="1.2" fill="#fff" stroke="#4a7aa6" stroke-width="1"/>
<path d="M644 141 h4 l1 1.2 h5.5 v6.3 h-10.5z" fill="#a5a5a5"/>
<rect x="660.3" y="139.3" width="7.5" height="9.5" rx="1" fill="#fff" stroke="#6a6a6a" stroke-width="1"/>
<path d="M664 148.5 L670 142.5" stroke="#2e4f7a" stroke-width="2"/>
<rect x="675" y="139.5" width="6.5" height="8" rx="0.8" fill="#fff" stroke="#9a9a9a" stroke-width="0.9"/>
<rect x="678" y="142" width="6.5" height="8" rx="0.8" fill="#fff" stroke="#9a9a9a" stroke-width="0.9"/>
<path d="M690.5 139.8 L699.8 149.2 M699.8 139.8 L690.5 149.2" stroke="#b0b0b0" stroke-width="1.1"/>
<rect x="711.5" y="139.3" width="7.5" height="9.5" rx="1" fill="#fff" stroke="#6a6a6a" stroke-width="1"/>
<circle cx="719" cy="147" r="2.6" fill="#555" stroke="#fff" stroke-width="0.6"/>
<circle cx="719" cy="147" r="0.9" fill="#fff"/>
<path d="M736.5 140.5 L739.8 143.8 H737.6 V146.6 H735.4 V143.8 H733.2 Z" fill="#8fa9c6"/>
<!-- tree -->
<rect x="579.5" y="159.5" width="6" height="6" fill="#fff" stroke="#999" stroke-width="0.9"/>
<path d="M581 162.5 h3 M585.5 162.5 h4.5" stroke="#777" stroke-width="0.8"/>
<path d="M590 162.8 L595.3 156.8 L600.7 162.8 Z" fill="#555"/>
<rect x="591.8" y="162" width="7" height="5" fill="#555"/>
<rect x="594.4" y="163.8" width="1.8" height="3.2" fill="#fff"/>
<rect x="597.6" y="156.5" width="1.6" height="3" fill="#555"/>
<path d="M595.9 169.5 V178.1 H604" fill="none" stroke="#aaa" stroke-width="0.9"/>
<path d="M604.8 173.6 H609.6 L612.2 176.2 V183.2 H604.8 Z" fill="#fff" stroke="#888" stroke-width="0.9"/>
<!-- properties panel -->
<path d="M738.5 354.8 h4 l-2 2z" fill="#555"/>
<g fill="#fff" stroke="#555" stroke-width="0.8">
<rect x="580.5" y="367.5" width="4" height="4"/><rect x="580.5" y="373" width="4" height="4"/>
</g>
<path d="M581.5 369.5 h2 M582.5 368.5 v2 M581.5 375 h2 M585.5 369.5 h4 M585.5 375 h4" stroke="#555" stroke-width="0.7"/>
<text x="596.5" y="371.5" font-size="6" font-family="Liberation Sans" fill="#2e6ab3" font-weight="bold">A</text>
<text x="596.5" y="378" font-size="6" font-family="Liberation Sans" fill="#d27a35" font-weight="bold">Z</text>
<path d="M604 366.5 V376.5 M602.2 374.8 L604 377.8 L605.8 374.8" fill="#333" stroke="#333" stroke-width="0.9"/>
<path d="M616 370.5 V378" stroke="#2e6ab3" stroke-width="2.4"/>
<path d="M612.4 366.4 V369 Q612.4 372 616 372 Q619.6 372 619.6 369 V366.4 L617.8 366.4 L617.8 369 H614.2 V366.4 Z" fill="#2e6ab3"/>
<path d="M631 367 H637 L633.5 371.8 H636 L627 377.8 L629.8 372.8 H628 Z" fill="#2e6ab3"/>
<circle cx="739.5" cy="370.5" r="3.3" fill="none" stroke="#3b7a8d" stroke-width="1.5"/>
<path d="M737.1 372.9 L734.2 375.8" stroke="#3b7a8d" stroke-width="1.8"/>
<path d="M583 388.6 V392.2 H579.4 Z" fill="#999"/>
<g fill="#fff" stroke="#666" stroke-width="0.8">
<rect x="651" y="401.9" width="5.5" height="5.5" rx="0.5"/>
<rect x="651" y="416.6" width="5.5" height="5.5" rx="0.5"/>
<rect x="651" y="431.3" width="5.5" height="5.5" rx="0.5"/>
<rect x="651" y="446.0" width="5.5" height="5.5" rx="0.5"/>
<rect x="651" y="460.7" width="5.5" height="5.5" rx="0.5"/>
<rect x="651" y="475.4" width="5.5" height="5.5" rx="0.5"/>
</g>
<rect x="736.5" y="383.5" width="10.5" height="12.3" fill="#fff" stroke="#cfcfcf" stroke-width="0.8"/>
<path d="M739 391.5 h5.5 l-2.75 -2.8z" fill="#444"/>
<rect x="736.5" y="395.8" width="10.5" height="8.3" fill="#fff" stroke="#cfcfcf" stroke-width="0.8"/>
<rect x="736.5" y="471.8" width="10.5" height="12" fill="#fff" stroke="#cfcfcf" stroke-width="0.8"/>
<path d="M739 476 h5.5 l-2.75 2.8z" fill="#444"/>
<!-- zoom slider -->
<path d="M614 543.6 h5 M695 543.3 h5 M697.5 540.8 v5" stroke="#666" stroke-width="1"/>
<path d="M625 543 H687" stroke="#bcbcbc" stroke-width="1"/>
<rect x="655.3" y="538" width="2.7" height="10" fill="#f4f4f4" stroke="#8c8c8c" stroke-width="0.8"/>
<g fill="#bbb"><rect x="745" y="540" width="1" height="1"/><rect x="743" y="542" width="1" height="1"/><rect x="745" y="542" width="1" height="1"/><rect x="741" y="544" width="1" height="1"/><rect x="743" y="544" width="1" height="1"/><rect x="745" y="544" width="1" height="1"/></g>
</svg>
<div class="t s" style="left:710px;top:539.5px;color:#444">100%</div>
<div class="a" style="left:0;top:549px;width:750px;height:2px;background:#4a70a0"></div>
</body></html>
